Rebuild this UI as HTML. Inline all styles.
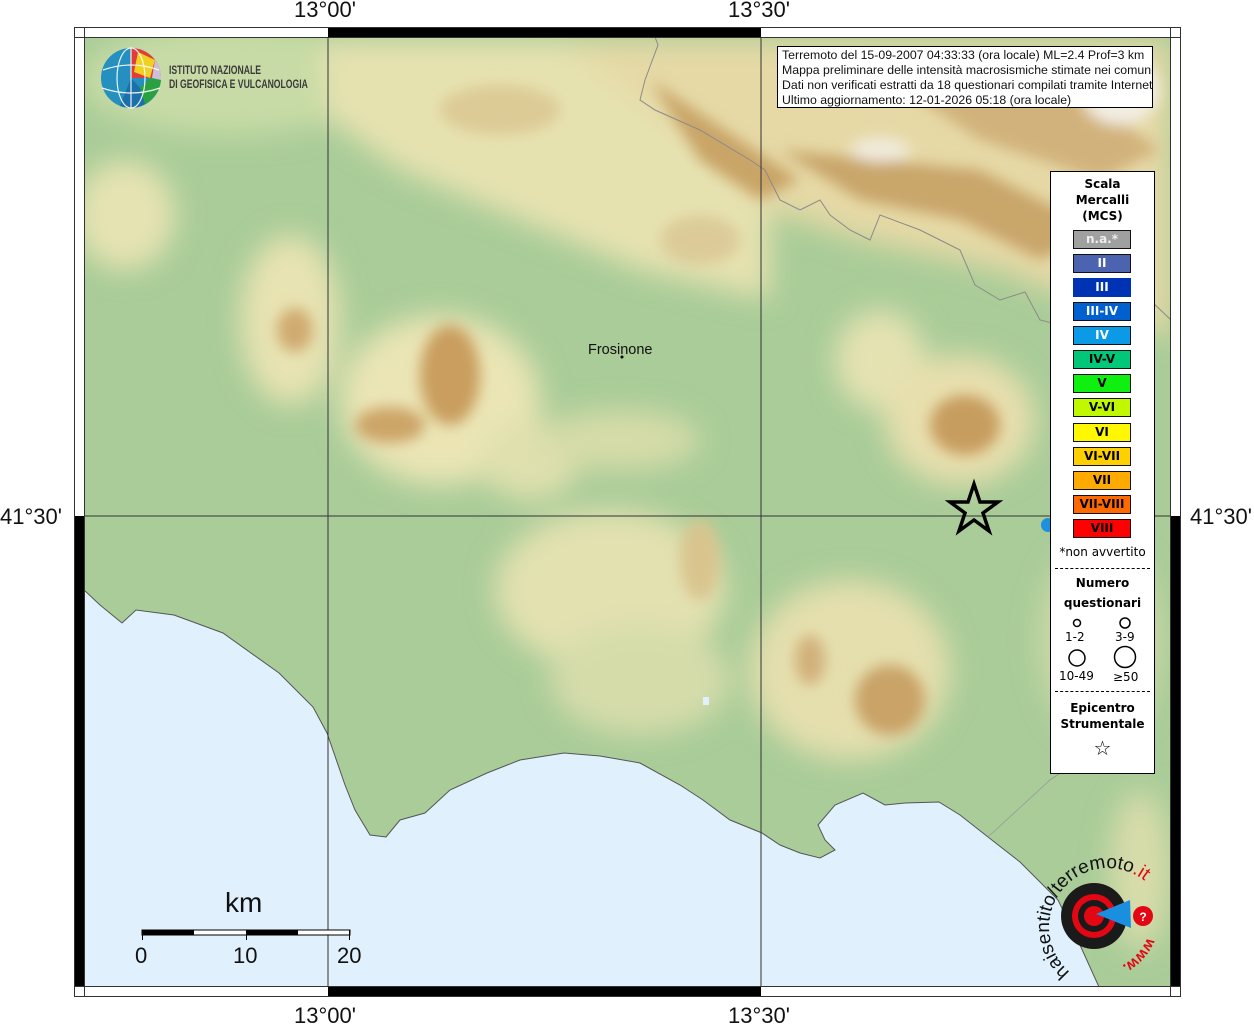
<!DOCTYPE html>
<html><head><meta charset="utf-8">
<style>
html,body{margin:0;padding:0;background:#fff;}
body{width:1254px;height:1024px;position:relative;overflow:hidden;font-family:"Liberation Sans",sans-serif;}
.lbl{position:absolute;font-size:22px;color:#111;}
.leg{position:absolute;left:1050px;top:171px;width:103px;height:601px;background:#fff;border:1px solid #000;font-family:"DejaVu Sans",sans-serif;}
.leg .t{font-weight:bold;font-size:12px;text-align:center;line-height:16px;}
.box{position:absolute;left:22px;width:56px;height:17px;border:1px solid #111;font-weight:bold;font-size:12px;text-align:center;line-height:17px;}
.info{position:absolute;left:777px;top:46px;width:376px;height:62px;background:#fff;border:1px solid #000;font-size:12.3px;line-height:15px;padding:1px 0 0 4px;box-sizing:border-box;white-space:nowrap;overflow:hidden;color:#111;}
</style></head><body>
<svg width="1254" height="1024" style="position:absolute;left:0;top:0">
<defs>
<filter id="b" x="-30%" y="-30%" width="160%" height="160%"><feGaussianBlur stdDeviation="14"/></filter>
<filter id="b2" x="-30%" y="-30%" width="160%" height="160%"><feGaussianBlur stdDeviation="7"/></filter>
<clipPath id="c"><rect x="84" y="37" width="1087" height="950"/></clipPath>
</defs>
<g clip-path="url(#c)">
<rect x="84" y="37" width="1087" height="950" fill="#a9cc98"/>
<g filter="url(#b)">
<ellipse cx="230" cy="80" rx="150" ry="55" fill="#c8dba6"/>
<ellipse cx="125" cy="215" rx="50" ry="55" fill="#e6e3b2"/>
<path d="M320 40 L660 40 L770 160 L770 300 L640 270 L520 220 L400 170 L330 120 Z" fill="#e6e2b0"/>
<path d="M560 40 L1171 40 L1171 340 L1000 270 L860 240 L770 210 L700 150 Z" fill="#e6d9a6"/>
<ellipse cx="290" cy="320" rx="50" ry="85" fill="#e8e3b2"/>
<ellipse cx="440" cy="400" rx="100" ry="85" fill="#ebe5b5"/>
<ellipse cx="530" cy="460" rx="50" ry="40" fill="#dfe0ae"/>
<ellipse cx="880" cy="360" rx="45" ry="50" fill="#e5e2b2"/>
<ellipse cx="960" cy="420" rx="75" ry="65" fill="#e8dfae"/>
<ellipse cx="610" cy="590" rx="115" ry="80" fill="#e3e1b0"/>
<ellipse cx="640" cy="680" rx="90" ry="55" fill="#d5dcaa"/>
<ellipse cx="850" cy="670" rx="100" ry="90" fill="#e5dfae"/>
<ellipse cx="1100" cy="640" rx="60" ry="100" fill="#cfd9a8"/>
<ellipse cx="1140" cy="870" rx="30" ry="80" fill="#d8dcaa"/>
<ellipse cx="620" cy="440" rx="80" ry="30" fill="#d6dca9"/>
</g>
<g filter="url(#b2)">
<path d="M650 80 L740 140 L800 180 L760 200 L700 160 Z" fill="#c9a467"/>
<path d="M780 150 L980 170 L1100 230 L1040 260 L960 220 L860 200 Z" fill="#c9a66b"/>
<path d="M860 60 L1050 70 L1160 150 L1100 180 L980 140 Z" fill="#d2b27c"/>
<ellipse cx="500" cy="110" rx="60" ry="25" fill="#d8c08a" opacity=".7"/>
<ellipse cx="700" cy="240" rx="40" ry="25" fill="#d6bd88" opacity=".6"/>
<ellipse cx="1120" cy="90" rx="40" ry="35" fill="#f2eee2"/>
<ellipse cx="880" cy="150" rx="30" ry="12" fill="#f0ebdc"/>
<ellipse cx="450" cy="375" rx="30" ry="50" fill="#c99e5f"/>
<ellipse cx="390" cy="425" rx="35" ry="18" fill="#cca468"/>
<ellipse cx="295" cy="330" rx="18" ry="22" fill="#cfaa70"/>
<ellipse cx="965" cy="425" rx="35" ry="30" fill="#c79d5e"/>
<ellipse cx="890" cy="700" rx="35" ry="35" fill="#c9a368"/>
<ellipse cx="810" cy="660" rx="15" ry="25" fill="#d2b07a"/>
<ellipse cx="700" cy="560" rx="20" ry="40" fill="#d9c48e"/>
</g>
<path d="M84 590 L100 605 L122 623 L136 610 L174 615 L223 633 L279 673 L313 707 L327 733 L345 785 L355 810 L370 835 L386 837 L400 820 L425 813 L450 790 L487 773 L520 760 L564 753 L600 756 L640 763 L680 785 L703 800 L730 820 L762 833 L780 845 L800 853 L820 858 L835 850 L825 840 L818 825 L835 805 L863 793 L885 805 L905 803 L939 802 L960 815 L988 837 L1020 862 L1058 900 L1080 945 L1099 987 L84 987 Z" fill="#e0f1fd" stroke="#555" stroke-width="1"/>
<path d="M655 37 L658 45 L645 80 L640 100 L655 110 L700 130 L750 160 L765 170 L780 200 L800 210 L820 200 L830 215 L850 230 L870 240 L880 215 L920 230 L940 240 L960 250 L975 285 L1000 300 L1025 292 L1040 320 L1080 330" fill="none" stroke="#8a8a8a" stroke-width="1"/>
<path d="M1150 300 L1171 320" fill="none" stroke="#8a8a8a"/>
<path d="M988 837 L1050 780 L1080 760" fill="none" stroke="#999" stroke-width="0.8"/>
<rect x="703" y="697" width="6" height="8" fill="#e0f1fd"/>
</g>
<line x1="328" y1="37" x2="328" y2="987" stroke="#333" stroke-width="1"/>
<line x1="761" y1="37" x2="761" y2="987" stroke="#333" stroke-width="1"/>
<line x1="84" y1="516" x2="1171" y2="516" stroke="#333" stroke-width="1"/>
<rect x="74.5" y="27.5" width="1106" height="969" fill="none" stroke="#333"/>
<rect x="84.5" y="37.5" width="1086" height="949" fill="none" stroke="#333"/>
<rect x="328" y="28" width="433" height="9" fill="#000"/>
<rect x="328" y="987" width="433" height="9" fill="#000"/>
<rect x="75" y="516" width="9" height="471" fill="#000"/>
<rect x="1171" y="516" width="9" height="471" fill="#000"/>
<line x1="74" y1="37.5" x2="84" y2="37.5" stroke="#333"/>
<line x1="84.5" y1="27" x2="84.5" y2="37" stroke="#333"/>
<line x1="1170.5" y1="27" x2="1170.5" y2="37" stroke="#333"/>
<line x1="1171" y1="37.5" x2="1181" y2="37.5" stroke="#333"/>
<line x1="74" y1="986.5" x2="84" y2="986.5" stroke="#333"/>
<line x1="84.5" y1="987" x2="84.5" y2="997" stroke="#333"/>
<line x1="1170.5" y1="987" x2="1170.5" y2="997" stroke="#333"/>
<line x1="1171" y1="986.5" x2="1181" y2="986.5" stroke="#333"/>
<path d="M974 484 L980 502 L998 502 L983 513 L989 531 L974 520 L959 531 L965 513 L950 502 L968 502 Z" fill="none" stroke="#000" stroke-width="3.5"/>
<circle cx="1048" cy="525" r="7" fill="#1e90e0"/>
<circle cx="622" cy="357" r="1.5" fill="#000"/>
<rect x="142" y="930" width="208" height="5" fill="#fff" stroke="#000" stroke-width="1"/>
<rect x="142" y="930" width="52" height="5" fill="#000"/>
<rect x="246" y="930" width="52" height="5" fill="#000"/>
<line x1="142.5" y1="930" x2="142.5" y2="940" stroke="#000"/>
<line x1="246.5" y1="930" x2="246.5" y2="940" stroke="#000"/>
<line x1="349.5" y1="930" x2="349.5" y2="940" stroke="#000"/>
<g>
<circle cx="131" cy="78" r="30" fill="#2590c0"/>
<path d="M131 48 A30 30 0 0 1 161 78 L131 78 Z" fill="#e53a3a"/>
<path d="M138 52 L155 60 L150 78 L134 72 Z" fill="#f0d020"/>
<path d="M150 78 L161 78 A30 30 0 0 1 145 104 L140 88 Z" fill="#2aa040"/>
<path d="M131 78 L140 88 L145 104 A30 30 0 0 1 120 106 Z" fill="#1c6fa8"/>
<path d="M155 60 A30 30 0 0 1 161 80 L152 78 Z" fill="#ccc0d8"/>
<g fill="none" stroke="#fff" stroke-width="1.2" opacity=".9">
<ellipse cx="131" cy="78" rx="14" ry="30"/>
<path d="M103 70 Q131 60 159 70"/><path d="M102 88 Q131 98 160 88"/><line x1="131" y1="48" x2="131" y2="108"/>
</g>
</g>
<circle cx="1094" cy="916" r="33" fill="#1a1a1a"/>
<circle cx="1094" cy="916" r="22" fill="#e30613"/>
<circle cx="1094" cy="916" r="16" fill="#1a1a1a"/>
<circle cx="1094" cy="916" r="10" fill="#e30613"/>
<path d="M1096 914 L1130 900 L1131 928 Z" fill="#1a8fe0"/>
<circle cx="1143" cy="916" r="10" fill="#e30613"/>
<text x="1143" y="921" font-size="12" fill="#fff" text-anchor="middle" font-weight="bold" font-family="Liberation Sans">?</text>
<path id="arc" d="M1070 972 A54 54 0 1 1 1146 882" fill="none"/>
<text font-family="Liberation Sans" font-size="19" fill="#111"><textPath href="#arc">haisentito/terremoto<tspan fill="#e30613">.it</tspan></textPath></text>
<path id="arc2" d="M1150 930 A56 56 0 0 1 1095 972" fill="none"/>
<text font-family="Liberation Sans" font-size="15" fill="#e30613" font-weight="bold"><textPath href="#arc2" startOffset="8">www.</textPath></text>
</svg>

<div style="position:absolute;left:169px;top:63px;font-family:'Liberation Sans',sans-serif;font-weight:bold;font-size:12px;line-height:14px;color:#3a3a3a;transform:scaleX(.72);transform-origin:left;white-space:nowrap">ISTITUTO NAZIONALE<br>DI GEOFISICA E VULCANOLOGIA</div>

<div class="lbl" style="left:294px;top:-3px">13°00'</div>
<div class="lbl" style="left:728px;top:-3px">13°30'</div>
<div class="lbl" style="left:294px;top:1003px">13°00'</div>
<div class="lbl" style="left:728px;top:1003px">13°30'</div>
<div class="lbl" style="left:0px;top:504px">41°30'</div>
<div class="lbl" style="left:1190px;top:504px">41°30'</div>

<div style="position:absolute;left:588px;top:342px;font-size:14.5px;color:#111">Frosinone</div>

<div style="position:absolute;left:225px;top:887px;font-size:28px;color:#111">km</div>
<div style="position:absolute;left:135px;top:943px;font-size:22px;color:#111">0</div>
<div style="position:absolute;left:233px;top:943px;font-size:22px;color:#111">10</div>
<div style="position:absolute;left:337px;top:943px;font-size:22px;color:#111">20</div>

<div class="info">Terremoto del 15-09-2007 04:33:33 (ora locale) ML=2.4 Prof=3 km<br>Mappa preliminare delle intensità macrosismiche stimate nei comuni<br>Dati non verificati estratti da 18 questionari compilati tramite Internet.<br>Ultimo aggiornamento: 12-01-2026 05:18 (ora locale)</div>

<div class="leg">
<div class="t" style="margin-top:4px">Scala<br>Mercalli<br>(MCS)</div>
<div class="box" style="top:58px;background:#a0a0a0;color:#eee">n.a.*</div>
<div class="box" style="top:82px;background:#4c64b0;color:#fff">II</div>
<div class="box" style="top:106px;background:#0032b4;color:#fff;border-color:#0032b4">III</div>
<div class="box" style="top:130px;background:#0060d0;color:#fff">III-IV</div>
<div class="box" style="top:154px;background:#0a9ae6;color:#fff">IV</div>
<div class="box" style="top:178px;background:#00c878;color:#000">IV-V</div>
<div class="box" style="top:202px;background:#10f010;color:#000">V</div>
<div class="box" style="top:226px;background:#c0f800;color:#000">V-VI</div>
<div class="box" style="top:251px;background:#fff800;color:#000">VI</div>
<div class="box" style="top:275px;background:#ffd000;color:#000">VI-VII</div>
<div class="box" style="top:299px;background:#ffaa00;color:#000">VII</div>
<div class="box" style="top:323px;background:#ff6a00;color:#000">VII-VIII</div>
<div class="box" style="top:347px;background:#ff0000;color:#000">VIII</div>
<div style="position:absolute;top:373px;left:0;width:103px;text-align:center;font-size:12px">*non avvertito</div>
<div style="position:absolute;top:396px;left:4px;width:95px;border-top:1px dashed #000"></div>
<div class="t" style="position:absolute;top:401px;width:103px;line-height:20px">Numero<br>questionari</div>
<svg style="position:absolute;left:0;top:440px" width="103" height="70">
<circle cx="26" cy="11" r="3.5" fill="none" stroke="#000" stroke-width="1.5"/>
<circle cx="74" cy="11" r="5" fill="none" stroke="#000" stroke-width="1.5"/>
<circle cx="26" cy="46" r="8" fill="none" stroke="#000" stroke-width="1.5"/>
<circle cx="74" cy="45" r="10.5" fill="none" stroke="#000" stroke-width="1.5"/>
</svg>
<div style="position:absolute;top:458px;left:14px;font-size:12px">1-2</div>
<div style="position:absolute;top:458px;left:64px;font-size:12px">3-9</div>
<div style="position:absolute;top:497px;left:8px;font-size:12px">10-49</div>
<div style="position:absolute;top:498px;left:62px;font-size:12px">≥50</div>
<div style="position:absolute;top:519px;left:4px;width:95px;border-top:1px dashed #000"></div>
<div class="t" style="position:absolute;top:528px;width:103px;">Epicentro<br>Strumentale</div>
<div style="position:absolute;top:564px;width:103px;text-align:center;font-size:20px">☆</div>
</div>
</body></html>
